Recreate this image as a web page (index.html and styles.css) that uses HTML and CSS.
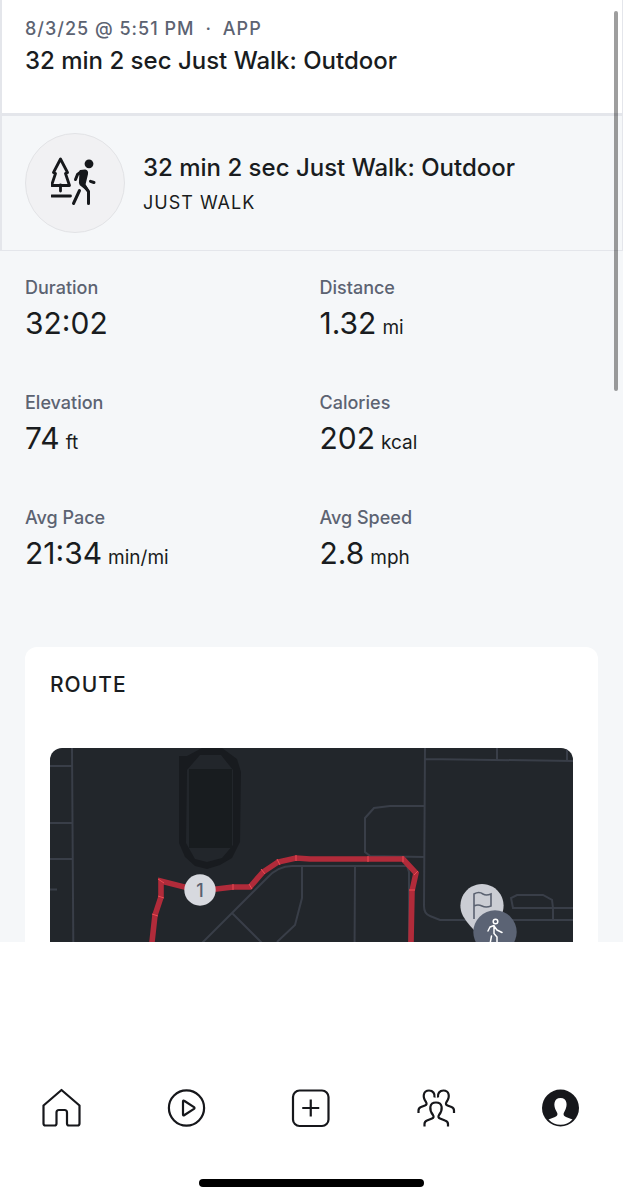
FILE: index.html
```html
<!DOCTYPE html>
<html lang="en">
<head>
<meta charset="utf-8">
<meta name="viewport" content="width=device-width, initial-scale=1">
<title>Just Walk: Outdoor</title>
<link rel="stylesheet" href="styles.css">
</head>
<body>
<div class="app">
  <main class="pane">
    <header class="summary">
      <p class="meta"><span>8/3/25 @ 5:51 PM</span><span>·</span><span>APP</span></p>
      <h1 class="title">32 min 2 sec Just Walk: Outdoor</h1>
    </header>

    <section class="activity">
      <div class="badge">
        <svg class="badge-icon" viewBox="3 0 48 52" aria-hidden="true">
          <g fill="none" stroke="#16181b" stroke-width="2.8" stroke-linecap="round" stroke-linejoin="round">
            <path d="M12.500 2 5.500 15.500 7.500 16.500 3.500 28.500H21.500L17.500 16.500 19.500 15.500Z"/>
            <path d="M12.500 28V34M3.500 39H22.500"/>
            <path stroke-width="3" d="M31.500 33.500 25.500 46.500M36 28.500 40.500 34.500V46.500M27.500 22.500 29.500 17.500 33.500 14.500M42.500 24.300 46 25.500"/>
            <path stroke-width="2" fill="#16181b" d="M32.500 14 37 13.500Q39.500 14 39 17L36.500 27.500 40 33.500 32.500 27.500Q31.500 26.500 32 24Z"/>
          </g>
          <circle cx="41" cy="6.800" r="4.400" fill="#16181b"/>
        </svg>
      </div>
      <div class="activity-text">
        <h2 class="title">32 min 2 sec Just Walk: Outdoor</h2>
        <p class="kind">JUST WALK</p>
      </div>
    </section>

    <dl class="stats">
      <div><dt>Duration</dt><dd>32:02</dd></div>
      <div><dt>Distance</dt><dd>1.32 <small>mi</small></dd></div>
      <div><dt>Elevation</dt><dd>74 <small>ft</small></dd></div>
      <div><dt>Calories</dt><dd>202 <small>kcal</small></dd></div>
      <div><dt>Avg Pace</dt><dd>21:34 <small>min/mi</small></dd></div>
      <div><dt>Avg Speed</dt><dd>2.8 <small>mph</small></dd></div>
    </dl>

    <section class="card">
      <h2 class="card-title">ROUTE</h2>
      <svg class="map" viewBox="0 0 523 300" preserveAspectRatio="xMidYMin slice" role="img" aria-label="Map of the walking route">
        <rect width="523" height="300" fill="#22262b"/>
        <path fill="#181b1f" fill-rule="evenodd" d="M129 8H137L152 0H172L187 11 191 24 190 94 182 110 170 117 157 121 145 118 135 109 129 95ZM137 22 150 7H171L183 22V97L172 110 157 114 145 111 136 95Z"/>
        <path fill="#181c1f" d="M139 21H182V100H139Z"/>
        <g fill="none" stroke="#393e48" stroke-width="2">
          <path d="M22 0 24 300M0 18H22M0 75H22M0 111H22M0 141.500H7"/>
          <path d="M47 300 217 130Q228 118 242 118H357L359 124V300M182 165 317 300M252 118V150L245 177 227 194M305 118 304 300"/>
          <path d="M375 0 374 158Q374 166 380 168L390 172H523M375 11 523 13M447 0V12M517 0V12"/>
          <path d="M374 58H340L324 60 315 70V104L320 108 374 109"/>
          <path d="M523 160H463L461 150 467 147 493 147 502 152 503 160V172"/>
        </g>
        <path fill="none" stroke="#b12b3a" stroke-width="5.600" d="M88 300 102 194 105 167 111 149 111 133 150 143 183 139H200L213 124 228 114 246 110 260 111 318 111 353 111 366 125 362 143 361 194V300"/>
        <path stroke="#f04a52" stroke-width="1" d="M102 166 108 168M108 148 114 150M108 131 114 135M183 136V142M199 136 202 141M211 121 215 126M227 111 230 117M246 107V113M318 108V114M353 108V114M364 127 368 123M359 142H365"/>
        <circle cx="150" cy="142" r="15.700" fill="#d7d9df"/>
        <text class="map-number" x="150" y="149">1</text>
        <path fill="#cbcdd4" d="M432 136A21.700 21.700 0 0 0 413 168Q418 177 432 190L451 168A21.700 21.700 0 0 0 432 136Z"/>
        <path fill="none" stroke="#5a6170" stroke-width="1.600" d="M424 171V146Q429 143 433 146 436 148 441 146V158Q436 160 432 158 428 156 424 158"/>
        <circle cx="445" cy="184" r="21.700" fill="#5b6374"/>
        <g fill="none" stroke="#fff" stroke-width="1.500" stroke-linecap="round" stroke-linejoin="round">
          <circle cx="445.500" cy="173.500" r="2.300"/>
          <path d="M438 183 440 179 444 177.500 444 185.500 447 189V198M444 178 447 182 452 184.500M441.500 188 440 196"/>
        </g>
      </svg>
    </section>
    <span class="scroll-thumb" aria-hidden="true"></span>
  </main>

  <footer class="dock">
    <nav class="tabs" aria-label="Main">
      <button class="tab" type="button" aria-label="Home"><svg viewBox="0 0 40 40"><path d="M1.500 17.500 19.500 2 37.500 17.500V35.500Q37.500 37.500 35.500 37.500H27Q25 37.500 25 35.500V24.500Q25 22 22.500 22H17Q14.500 22 14.500 24.500V35.500Q14.500 37.500 12.500 37.500H3.500Q1.500 37.500 1.500 35.500Z"/></svg></button>
      <button class="tab" type="button" aria-label="Classes"><svg viewBox="0 0 40 40"><circle cx="19.500" cy="20" r="17.600"/><path d="M16 13.500Q16 12 17.500 13L27 19.200Q28 20 27 20.800L17.500 27Q16 28 16 26.500Z"/></svg></button>
      <button class="tab" type="button" aria-label="Create"><svg viewBox="0 0 40 40"><rect x="2" y="2.500" width="35.500" height="35.500" rx="6.500"/><path d="M19.750 11.500V28.500M11.250 20H28.250"/></svg></button>
      <button class="tab" type="button" aria-label="Community"><svg viewBox="0 0 40 40"><path d="M8.500 38.500V36Q8.500 33.500 11 32.500L16 30.500Q18.500 29.500 17 27C13 22 13 14.500 20 14.500S27 22 23 27Q21.500 29.500 24 30.500L29 32.500Q32 33.500 32 36V38.500M2.500 25V22.500Q2.500 20 5 19L9 17.500Q11.500 16.500 10 14C6 8.500 7.500 2.500 13 2.500 17 2.500 19 5.500 18.500 9.500M38 25V22.500Q38 20 35.500 19L31.500 17.500Q29 16.500 30.500 14C34.500 8.500 33 2.500 27.500 2.500 23.500 2.500 21.500 5.500 22 9.500"/></svg></button>
      <button class="tab" type="button" aria-label="Profile"><svg viewBox="0 0 40 40"><circle class="solid" cx="19.500" cy="20" r="18.500"/><path class="hollow" d="M7.500 31.500 14 29Q18 27.500 15.500 23.500C12 18 12.500 10 19.500 10S27 18 23.500 23.500Q21 27.500 25 29L31.500 31.500Q26.500 36.800 19.500 36.800T7.500 31.500Z"/></svg></button>
    </nav>
    <span class="home-bar" aria-hidden="true"></span>
  </footer>
</div>
</body>
</html>
```
FILE: styles.css
```css
* { box-sizing: border-box; }

body {
  margin: 0;
  background: #fff;
  color: #191c20;
  font-family: Inter, "Liberation Sans", sans-serif;
}

h1, h2, p, dl, dd { margin: 0; }

.app {
  display: flex;
  flex-direction: column;
  height: 100vh;
}

.pane {
  position: relative;
  flex: 1;
  min-height: 0;
  overflow: hidden;
  background: #f5f7f9;
}

.summary {
  padding: 16px 23px 33px;
  background: #fff;
  border: solid #e4e6eb;
  border-width: 0 1px 3px 2px;
}

.meta {
  display: flex;
  gap: 11px;
  color: #5c6372;
  font-size: 18px;
  font-weight: 500;
  line-height: 26px;
  letter-spacing: 1px;
}

.title {
  font-size: 24px;
  font-weight: 500;
  line-height: 38px;
}

.activity {
  display: flex;
  align-items: flex-start;
  gap: 18px;
  padding: 17px 23px;
  border: solid #e4e6eb;
  border-width: 0 1px 1px 2px;
}

.badge {
  display: grid;
  place-items: center;
  width: 100px;
  height: 100px;
  border: 1px solid #e2e3e6;
  border-radius: 50%;
  background: #f1f1f3;
}

.badge-icon { width: 48px; height: 52px; }

.activity-text { padding-top: 16px; }

.kind {
  font-size: 18px;
  font-weight: 400;
  line-height: 32px;
  letter-spacing: 1px;
}

.stats {
  display: grid;
  grid-template-columns: 1fr 1fr;
  gap: 45px 16px;
  padding: 23px 25px 73px;
}

.stats dt {
  color: #5c6372;
  font-size: 18px;
  font-weight: 500;
  line-height: 28px;
}

.stats dd {
  display: flex;
  align-items: baseline;
  gap: 6px;
  font-size: 30px;
  line-height: 42px;
}

.stats small {
  font-size: 19px;
  font-weight: 400;
  line-height: 24px;
}

.card {
  margin: 0 25px;
  padding: 21px 25px;
  border-radius: 12px;
  background: #fff;
}

.card-title {
  margin-bottom: 46px;
  font-size: 21px;
  font-weight: 500;
  line-height: 34px;
  letter-spacing: 1px;
}

.map {
  display: block;
  width: 100%;
  height: 300px;
  border-radius: 12px;
}

.map-number {
  fill: #5a6170;
  font-size: 18px;
  font-weight: 500;
  text-anchor: middle;
}

.scroll-thumb {
  position: absolute;
  top: 11px;
  right: 5px;
  width: 4px;
  height: 380px;
  border-radius: 2px;
  background: rgb(0 0 0 / 38%);
}

.dock {
  display: flex;
  flex-direction: column;
  align-items: center;
  gap: 51px;
  padding: 146px 0 13px;
  background: #fff;
}

.tabs {
  display: flex;
  width: 100%;
}

.tab {
  display: flex;
  flex: 1;
  justify-content: center;
  padding: 0;
  border: 0;
  background: none;
}

.tab svg {
  width: 40px;
  height: 40px;
  fill: none;
  stroke: #16171b;
  stroke-width: 2.2;
  stroke-linejoin: round;
}

.tab .solid { fill: #16171b; stroke: none; }
.tab .hollow { fill: #fff; stroke: none; }

.home-bar {
  width: 36%;
  height: 8px;
  border-radius: 4px;
  background: #000;
}
```
